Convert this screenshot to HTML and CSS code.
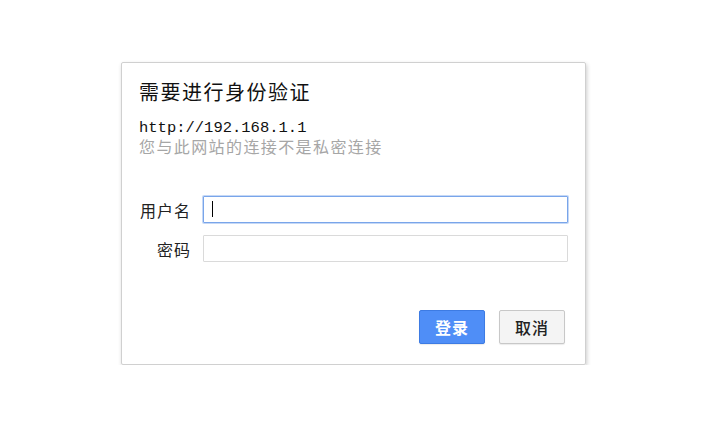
FILE: index.html
```html
<!DOCTYPE html>
<html lang="zh-CN">
<head>
    <meta charset="UTF-8">
    <meta name="viewport" content="width=device-width, initial-scale=1.0">
    <title>需要进行身份验证</title>
    <link rel="stylesheet" href="styles.css">
</head>
<body>
    <div class="dialog">
        <h1 class="title">需要进行身份验证</h1>
        <div class="origin">
            <div class="url">http://192.168.1.1</div>
            <div class="warning">您与此网站的连接不是私密连接</div>
        </div>
        <div class="form">
            <div class="row">
                <label class="label" for="username">用户名</label>
                <div class="field">
                    <input class="input active" id="username" type="text">
                    <span class="caret"></span>
                </div>
            </div>
            <div class="row">
                <label class="label" for="password">密码</label>
                <div class="field">
                    <input class="input" id="password" type="password">
                </div>
            </div>
        </div>
        <div class="actions">
            <button class="btn primary">登录</button>
            <button class="btn">取消</button>
        </div>
    </div>
</body>
</html>
```

FILE: styles.css
```css
body {
    margin: 0;
    background: #fff;
    font-family: "Noto Sans CJK SC", "Liberation Sans", sans-serif;
    color: #222;
}

.dialog {
    box-sizing: border-box;
    width: 465px;
    height: 303px;
    margin: 62px 0 0 121px;
    padding: 16px 17px 0 17px;
    border: 1px solid #d0d0d0;
    border-radius: 2px;
    box-shadow: 1px 2px 4px rgba(0, 0, 0, 0.2);
    display: flex;
    flex-direction: column;
}

.title {
    margin: 0;
    font-size: 20px;
    line-height: 26px;
    font-weight: normal;
    letter-spacing: 1.5px;
    color: #111;
}

.origin {
    margin-top: 14px;
}

.url {
    font-family: "Liberation Mono", monospace;
    font-size: 15.5px;
    line-height: 18px;
    color: #111;
}

.warning {
    font-size: 16px;
    line-height: 18px;
    color: #a6a6a6;
    letter-spacing: 1.4px;
}

.form {
    margin-top: 41px;
    display: flex;
    flex-direction: column;
    gap: 12px;
}

.row {
    display: flex;
    align-items: center;
    gap: 12px;
}

.label {
    width: 52px;
    text-align: right;
    font-size: 16px;
    letter-spacing: 1px;
    color: #222;
}

.field {
    position: relative;
    flex: 1;
}

.input {
    box-sizing: border-box;
    display: block;
    width: 100%;
    height: 27px;
    margin: 0;
    padding: 0 8px;
    border: 1px solid #dadada;
    border-radius: 1px;
    outline: none;
    background: #fff;
}

.input.active {
    border-color: #79a5ea;
    box-shadow: 0 0 0 1px #c5d8f6;
}

.caret {
    position: absolute;
    left: 9px;
    top: 5px;
    width: 1px;
    height: 16px;
    background: #000;
}

.actions {
    margin-top: 48px;
    display: flex;
    justify-content: flex-end;
    gap: 14px;
    padding-right: 3px;
}

.btn {
    box-sizing: border-box;
    width: 66px;
    height: 34px;
    padding: 0;
    border: 1px solid #c8c8c8;
    border-radius: 2px;
    background: #f4f4f4;
    color: #222;
    font-family: "Noto Sans CJK SC", sans-serif;
    font-size: 16px;
    font-weight: 500;
    letter-spacing: 1px;
    box-shadow: 0 1px 1px rgba(0, 0, 0, 0.08);
}

.btn.primary {
    background: #4f8ef7;
    border-color: #3d7be3;
    color: #fff;
    font-weight: bold;
}
```
